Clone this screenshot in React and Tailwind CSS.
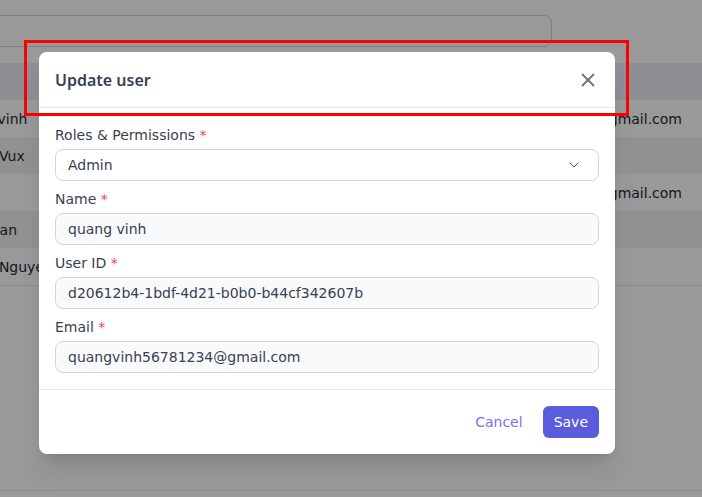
import { X, ChevronDown } from 'lucide-react'

const rows = [
  { name: 'quang vinh', email: 'quangvinh1234@gmail.com', shade: false },
  { name: 'Hoang Vux', email: '', shade: true },
  { name: 'Tuan', email: 'tuan2001@gmail.com', shade: false },
  { name: 'Ngoc Han', email: '', shade: true },
  { name: 'Hoang Nguyen', email: '', shade: false },
]

function Field({ label, children }) {
  return (
    <div className="flex flex-col pb-2">
      <label className="text-sm leading-5 text-[#374151]">
        {label} <span className="text-[#ef4444]">*</span>
      </label>
      <div className="mt-1">{children}</div>
    </div>
  )
}

function TextInput({ value }) {
  return (
    <input
      readOnly
      value={value}
      className="w-full h-8 rounded-lg border border-[#d1d5db] bg-[#f9fafb] px-3 text-sm text-[#374151] outline-none"
    />
  )
}

export default function App() {
  return (
    <div className="relative w-[702px] h-[497px] overflow-hidden bg-white text-[#1f2937]" style={{ fontFamily: '"DejaVu Sans", sans-serif' }}>
      {/* page behind the modal */}
      <div className="pt-[15px]">
        <div className="-ml-[20px] w-[572px] h-8 rounded-lg border border-[#d1d5db]" />
        <div className="mt-4">
          <div className="h-[37px] bg-[#eceef8]" />
          {rows.map((r, i) => (
            <div key={i} className={'flex items-center h-[37px] text-sm ' + (r.shade ? 'bg-[#f2f2f2]' : 'bg-white')}>
              <div className="-ml-[51px] w-[300px] whitespace-nowrap">{r.name}</div>
              <div className="flex-1 text-right pr-[20px] whitespace-nowrap">{r.email}</div>
            </div>
          ))}
          <div className="border-t border-[#e5e7eb]" />
        </div>
        <div className="absolute left-0 right-0 top-[490px] border-t border-[#e5e7eb]" />
      </div>

      {/* backdrop */}
      <div className="absolute inset-0 bg-black/40" />

      {/* modal */}
      <div className="absolute left-[39px] top-[52px] w-[576px] rounded-lg bg-white shadow-xl">
        <div className="flex items-center justify-between h-14 px-4 border-b border-[#e5e7eb]">
          <h2 className="text-base font-semibold text-[#374151]" style={{ fontFamily: '"Noto Sans", sans-serif' }}>Update user</h2>
          <button className="text-[#6b7280]">
            <X size={22} strokeWidth={2} />
          </button>
        </div>

        <div className="px-4 pt-[17px] pb-2 border-b border-[#e5e7eb]">
          <Field label="Roles & Permissions">
            <div className="flex items-center justify-between h-8 rounded-lg border border-[#d1d5db] bg-white px-3 text-sm text-[#374151]">
              <span>Admin</span>
              <ChevronDown size={16} strokeWidth={1.5} className="text-[#4b5563] mr-[4px]" />
            </div>
          </Field>
          <Field label="Name">
            <TextInput value="quang vinh" />
          </Field>
          <Field label="User ID">
            <TextInput value="d20612b4-1bdf-4d21-b0b0-b44cf342607b" />
          </Field>
          <Field label="Email">
            <TextInput value="quangvinh56781234@gmail.com" />
          </Field>
        </div>

        <div className="flex items-center justify-end gap-5 px-4 py-4">
          <button className="text-sm text-[#7c6ff2]">Cancel</button>
          <button className="h-8 px-[11px] rounded-md bg-[#5a5bdd] text-sm text-white">Save</button>
        </div>
      </div>

      {/* red highlight frame */}
      <div className="absolute left-[24px] top-[40px] w-[605px] h-[76px] border-[3px] border-[#ff0000]" />
    </div>
  )
}
